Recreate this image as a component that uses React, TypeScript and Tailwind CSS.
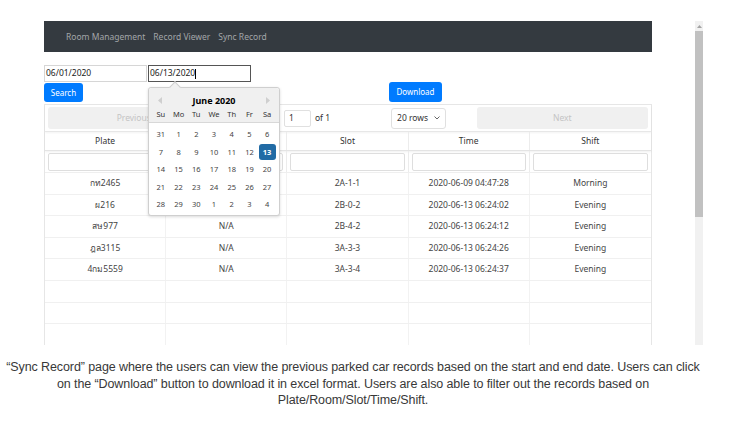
import React from 'react';

const rows = [
  { plate: 'กท2465', room: 'N/A', slot: '2A-1-1', time: '2020-06-09 04:47:28', shift: 'Morning' },
  { plate: 'ผ216', room: 'N/A', slot: '2B-0-2', time: '2020-06-13 06:24:02', shift: 'Evening' },
  { plate: 'สษ977', room: 'N/A', slot: '2B-4-2', time: '2020-06-13 06:24:12', shift: 'Evening' },
  { plate: 'ฎล3115', room: 'N/A', slot: '3A-3-3', time: '2020-06-13 06:24:26', shift: 'Evening' },
  { plate: '4กม5559', room: 'N/A', slot: '3A-3-4', time: '2020-06-13 06:24:37', shift: 'Evening' },
];

const cols = ['Plate', 'Room', 'Slot', 'Time', 'Shift'];

const weeks = [
  [31, 1, 2, 3, 4, 5, 6],
  [7, 8, 9, 10, 11, 12, 13],
  [14, 15, 16, 17, 18, 19, 20],
  [21, 22, 23, 24, 25, 26, 27],
  [28, 29, 30, 1, 2, 3, 4],
];

function Calendar() {
  return (
    <div className="absolute left-[104px] top-[66px] w-[132px] h-[129px] bg-white border border-[#cfcfcf] rounded-[3px] shadow-[0_1px_3px_rgba(0,0,0,0.15)] z-10">
      {/* little caret */}
      <div className="absolute left-[22px] -top-[5px] w-[8px] h-[8px] rotate-45 bg-[#f0f0f0] border-l border-t border-[#cfcfcf]" />
      <div className="relative bg-[#f0f0f0] border-b border-[#d8d8d8] h-[35px] rounded-t-[3px]">
        <div className="flex items-center justify-between px-[9px] pt-[6px] h-[18px]">
          <svg width="4" height="7" viewBox="0 0 4 7"><path d="M4 0 L0 3.5 L4 7 Z" fill="#cfcfcf" /></svg>
          <span className="font-bold text-[9px] text-black leading-none">June 2020</span>
          <svg width="4" height="7" viewBox="0 0 4 7"><path d="M0 0 L4 3.5 L0 7 Z" fill="#cfcfcf" /></svg>
        </div>
        <div className="grid grid-cols-7 px-[3px] mt-[3px]">
          {['Su', 'Mo', 'Tu', 'We', 'Th', 'Fr', 'Sa'].map(d => (
            <span key={d} className="text-center text-[7.5px] text-[#333] leading-[10px]">{d}</span>
          ))}
        </div>
      </div>
      <div className="px-[3px] pt-[3px]">
        {weeks.map((w, i) => (
          <div key={i} className="grid grid-cols-7 h-[17.5px] items-center">
            {w.map((d, j) => (
              <div key={j} className="flex justify-center">
                {i === 1 && j === 6 ? (
                  <span className="w-[17px] h-[16px] flex items-center justify-center bg-[#216ba5] text-white font-bold rounded-[3px] text-[7.5px]">{d}</span>
                ) : (
                  <span className="text-[7.5px] text-[#444]">{d}</span>
                )}
              </div>
            ))}
          </div>
        ))}
      </div>
    </div>
  );
}

export default function App() {
  return (
    <div className="w-[749px] h-[439px] bg-white overflow-hidden" style={{ fontFamily: '"Noto Sans", "Liberation Sans", sans-serif' }}>
      <div className="pt-[21px] flex">
        <div className="w-[44px]" />
        <div className="relative w-[608px] h-[324px] overflow-hidden">
          {/* navbar */}
          <nav className="h-[31px] pt-[2px] bg-[#343a40] flex items-center pl-[22px] gap-[8px] text-[8.5px] text-[#a3a6a9]">
            <span>Room Management</span>
            <span>Record Viewer</span>
            <span>Sync Record</span>
          </nav>

          {/* date range */}
          <div className="flex mt-[13px]">
            <div className="w-[103px] h-[17px] border border-[#d6d6d6] text-[8.5px] text-[#222] flex items-center pl-[1px]">06/01/2020</div>
            <div className="ml-[1px] w-[103px] h-[17px] border border-[#555] text-[8.5px] text-[#222] flex items-center pl-[1px]">
              06/13/2020<span className="w-[1px] h-[10px] bg-black" />
            </div>
          </div>
          <div className="flex items-start">
            <button className="mt-[1px] w-[39px] h-[19px] bg-[#007bff] text-white text-[8px] rounded-[3px] flex items-center justify-center">Search</button>
            <button className="ml-[306px] w-[53px] h-[20px] bg-[#007bff] text-white text-[8px] rounded-[3px] flex items-center justify-center">Download</button>
          </div>

          {/* table */}
          <div className="mt-[2px] border border-[#e6e6e6] text-[8.5px] text-[#333]">
            <div className="flex items-center px-[3px] h-[27px] border-b border-[#e8e8e8] shadow-[0_1px_2px_rgba(0,0,0,0.05)]">
              <div className="flex-[1] h-[22px] bg-[#f0f0f0] rounded-[3px] flex items-center justify-center text-[#c4c4c4]">Previous</div>
              <div className="flex-[1.5] flex items-center justify-around">
                <div className="flex items-center gap-[4px] ml-[10px]">
                  <span>Page</span>
                  <div className="w-[27px] h-[17px] border border-[#e0e0e0] rounded-[2px] flex items-center pl-[4px]">1</div>
                  <span>of 1</span>
                </div>
                <div className="w-[55px] h-[21px] border border-[#e0e0e0] rounded-[3px] flex items-center justify-between px-[5px]">
                  <span>20 rows</span>
                  <svg width="6" height="4" viewBox="0 0 6 4"><path d="M0.5 0.5 L3 3 L5.5 0.5" stroke="#555" strokeWidth="0.9" fill="none" /></svg>
                </div>
              </div>
              <div className="flex-[1] h-[22px] bg-[#f0f0f0] rounded-[3px] flex items-center justify-center text-[#c4c4c4]">Next</div>
            </div>

            <div className="grid grid-cols-5 h-[19px] border-b border-[#e4e4e4] shadow-[0_1px_2px_rgba(0,0,0,0.06)]">
              {cols.map((c, i) => (
                <div key={c} className={`flex items-center justify-center ${i < 4 ? 'border-r border-[#ececec]' : ''}`}>{c}</div>
              ))}
            </div>
            <div className="grid grid-cols-5 h-[22px] border-b border-[#efefef]">
              {cols.map((c, i) => (
                <div key={c} className={`px-[3px] flex items-center ${i < 4 ? 'border-r border-[#ececec]' : ''}`}>
                  <div className="w-full h-[18px] border border-[#dedede] rounded-[2px] bg-white" />
                </div>
              ))}
            </div>
            {rows.map((r, k) => (
              <div key={k} className="grid grid-cols-5 h-[21.6px] border-b border-[#f0f0f0] text-[#444]">
                {[r.plate, r.room, r.slot, r.time, r.shift].map((v, i) => (
                  <div key={i} className={`flex items-center justify-center ${i < 4 ? 'border-r border-[#f2f2f2]' : ''}`}>{v}</div>
                ))}
              </div>
            ))}
            {[0, 1, 2].map(k => (
              <div key={k} className="grid grid-cols-5 h-[21.6px] border-b border-[#f0f0f0]">
                {[0, 1, 2, 3, 4].map(i => (
                  <div key={i} className={i < 4 ? 'border-r border-[#f2f2f2]' : ''} />
                ))}
              </div>
            ))}
          </div>

          <Calendar />
        </div>
        <div className="w-[43px]" />
        {/* scrollbar */}
        <div className="w-[8px] h-[324px] bg-[#f1f1f1] flex flex-col">
          <div className="h-[10px] flex items-center justify-center">
            <svg width="5" height="3" viewBox="0 0 5 3"><path d="M0 3 L2.5 0 L5 3 Z" fill="#a3a3a3" /></svg>
          </div>
          <div className="h-[186px] bg-[#c1c1c1]" />
        </div>
      </div>

      <p className="mt-[14px] pr-[43px] text-center text-[12.5px] leading-[16.5px] text-[#383838] tracking-[-0.1px]" style={{ fontFamily: '"Liberation Sans", Arial, sans-serif' }}>
        “Sync Record” page where the users can view the previous parked car records based on the start and end date. Users can click<br />
        on the “Download” button to download it in excel format. Users are also able to filter out the records based on<br />
        Plate/Room/Slot/Time/Shift.
      </p>
    </div>
  );
}
